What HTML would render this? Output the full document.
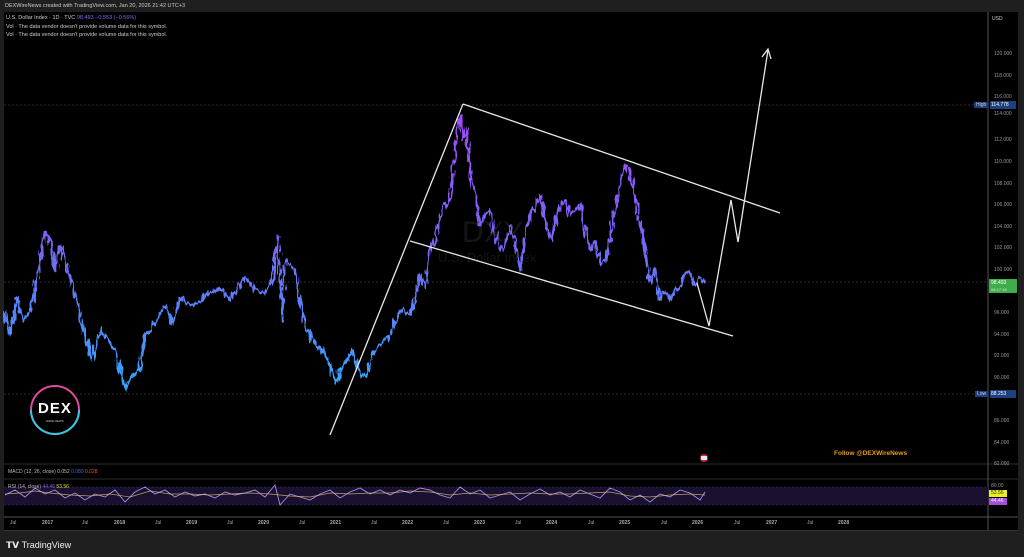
<!DOCTYPE html>
<html><head><meta charset="utf-8"><style>
*{margin:0;padding:0;box-sizing:border-box}
body{width:1024px;height:557px;background:#1f1f1f;font-family:"Liberation Sans",sans-serif;overflow:hidden;position:relative}
.t{position:absolute;white-space:nowrap}
</style></head><body>
<div class="t" style="left:5px;top:3px;font-size:5.5px;color:#ccc">DEXWireNews created with TradingView.com, Jan 20, 2026 21:42 UTC+3</div>
<div style="position:absolute;left:4px;top:12px;width:1014px;height:518px;background:#000"></div>
<svg style="position:absolute;left:0;top:0" width="1024" height="557">
<defs>
<linearGradient id="g" gradientUnits="userSpaceOnUse" x1="0" y1="110" x2="0" y2="390">
<stop offset="0" stop-color="#a04cff"/><stop offset="0.45" stop-color="#7a63f5"/><stop offset="1" stop-color="#35a6ff"/></linearGradient>
<filter id="n" x="-5%" y="-5%" width="110%" height="110%">
<feTurbulence type="fractalNoise" baseFrequency="0.35 0.08" numOctaves="2" seed="3"/>
<feDisplacementMap in="SourceGraphic" scale="9" xChannelSelector="R" yChannelSelector="G"/>
</filter>
</defs>
<g stroke-width="1">
<line x1="4" y1="105" x2="988" y2="105" stroke="#2a2a2a" stroke-dasharray="2 2"/>
<line x1="4" y1="282" x2="988" y2="282" stroke="#2a2a2a" stroke-dasharray="2 2"/>
<line x1="4" y1="394" x2="988" y2="394" stroke="#2a2a2a" stroke-dasharray="2 2"/>
<line x1="4" y1="464" x2="1018" y2="464" stroke="#2c2c2c"/>
<line x1="4" y1="479" x2="1018" y2="479" stroke="#2c2c2c"/>
<line x1="4" y1="517" x2="1018" y2="517" stroke="#555"/>
<line x1="988" y1="12" x2="988" y2="530" stroke="#555"/>
</g>
<rect x="4" y="487" width="984" height="18" fill="#1a1030"/>
<line x1="4" y1="487" x2="988" y2="487" stroke="#443366" stroke-width="0.6" stroke-dasharray="2 2"/>
<line x1="4" y1="505" x2="988" y2="505" stroke="#443366" stroke-width="0.6" stroke-dasharray="2 2"/>
<text x="462" y="242" font-size="30" fill="#151515" font-family="Liberation Sans">DXY</text>
<text x="438" y="262" font-size="13" fill="#151515" font-family="Liberation Sans">U.S. Dollar Index</text>
<polyline filter="url(#n)" fill="none" stroke="url(#g)" stroke-width="2.6" stroke-linejoin="round" points="5,312 10,335 17,297 22,320 30,312 37,280 45,232 50,240 55,270 60,247 67,265 75,295 85,335 92,360 100,330 108,340 115,350 125,388 133,375 140,370 145,335 155,322 165,305 172,325 180,298 190,305 200,302 210,292 220,288 230,300 240,285 246,277 255,290 265,295 272,280 278,235 282,320 285,260 290,265 295,270 300,300 305,325 315,345 322,350 330,365 335,382 345,363 352,350 358,370 365,378 372,355 380,345 390,335 400,310 410,315 415,300 420,275 425,288 430,250 435,240 440,215 445,205 450,200 455,150 460,115 463,140 467,130 470,175 475,195 480,225 485,215 490,210 495,235 500,250 505,245 510,225 515,240 520,272 525,240 530,215 535,205 540,195 545,220 550,240 555,225 560,205 565,200 570,215 575,210 580,205 585,230 590,250 595,242 600,262 605,262 610,240 615,210 620,185 625,165 630,172 635,195 640,225 645,250 650,282 655,270 660,300 665,290 670,300 675,290 680,288 685,272 690,272 695,285 700,278 705,283"/>
<g stroke="#e8e8e8" stroke-width="1.3" fill="none">
<line x1="330" y1="435" x2="463" y2="104"/>
<line x1="463" y1="104" x2="780" y2="213"/>
<line x1="410" y1="241" x2="733" y2="336"/>
<polyline points="697,283 709,326 731,200 738,242 768,50"/>
<polyline points="762,57 768,49 771,59"/>
</g>
<path fill="none" stroke="#b89cff" stroke-width="0.9" opacity="0.9" d="M5 495 L15 490 L25 497 L35 488 L45 494 L55 490 L65 498 L75 493 L85 500 L95 494 L105 497 L115 490 L125 502 L135 492 L145 487 L155 494 L165 490 L175 497 L185 492 L195 496 L205 494 L215 498 L225 492 L235 495 L245 493 L255 490 L265 497 L275 485 L280 505 L290 494 L300 497 L310 500 L320 494 L330 490 L340 498 L350 492 L360 488 L370 494 L380 490 L390 495 L400 490 L410 493 L420 488 L430 490 L440 495 L450 498 L460 487 L470 494 L480 490 L490 498 L500 495 L510 492 L520 500 L530 494 L540 489 L550 495 L560 492 L570 497 L580 490 L590 494 L600 498 L610 488 L620 492 L630 500 L640 495 L650 502 L660 494 L670 497 L680 490 L690 493 L700 500 L705 492"/>
<path fill="none" stroke="#e8c070" stroke-width="0.7" opacity="0.8" d="M5 494 L20 493 L35 491 L50 493 L70 495 L90 496 L110 494 L130 497 L150 491 L170 494 L190 494 L210 495 L230 494 L250 493 L270 494 L290 496 L310 497 L330 493 L350 494 L370 493 L390 493 L410 491 L430 492 L450 495 L470 493 L490 495 L510 494 L530 493 L550 494 L570 494 L590 493 L610 492 L630 496 L650 497 L670 495 L690 494 L705 495"/>
<circle cx="704" cy="458" r="4" fill="#c8252f"/><rect x="701" y="456" width="6" height="4" fill="#dfe8ff"/>
<circle cx="55" cy="410" r="24" fill="#000" stroke="#e04aa0" stroke-width="2"/>
<path d="M31 410 A24 24 0 0 0 79 410" fill="none" stroke="#35c8e0" stroke-width="2"/>
</svg>
<div class="t" style="left:38px;top:400px;font-size:15px;font-weight:bold;color:#fff;letter-spacing:1px">DEX</div>
<div class="t" style="left:46px;top:419px;font-size:3px;color:#ccc">WIRE NEWS</div>
<div class="t" style="left:6px;top:15px;font-size:5.5px;color:#ccc">U.S. Dollar Index · 1D · TVC <span style="color:#7b6cf6">98.493 −0.553 (−0.56%)</span></div>
<div class="t" style="left:6px;top:24px;font-size:5.5px;color:#ccc">Vol · The data vendor doesn't provide volume data for this symbol.</div>
<div class="t" style="left:6px;top:32px;font-size:5.5px;color:#ccc">Vol · The data vendor doesn't provide volume data for this symbol.</div>
<div class="t" style="left:8px;top:469px;font-size:5px;color:#bbb">MACD (12, 26, close) 0.052 <span style="color:#3a6cf0">0.080</span> <span style="color:#f05a28">0.028</span></div>
<div class="t" style="left:8px;top:484px;font-size:5px;color:#bbb">RSI (14, close) <span style="color:#8a5ff0">44.46</span> <span style="color:#d4e820">53.56</span></div>
<div class="t" style="left:834px;top:450px;font-size:6.5px;font-weight:bold;color:#e89a20">Follow @DEXWireNews</div>
<div class="t" style="left:992px;top:16px;font-size:5px;color:#ccc">USD</div>
<div style="position:absolute;left:990px;top:101px;width:26px;height:8px;background:#1e3f80"></div>
<div class="t" style="left:974px;top:102px;font-size:5px;color:#ccc;background:#1e3f80;padding:0 2px">High</div>
<div class="t" style="left:991px;top:102px;font-size:5px;color:#fff">114.778</div>
<div style="position:absolute;left:989px;top:279px;width:28px;height:14px;background:#3fae4a"></div>
<div class="t" style="left:991px;top:280px;font-size:5px;color:#fff">98.493</div>
<div class="t" style="left:991px;top:287px;font-size:4px;color:#d0f0d0">06:17:18</div>
<div style="position:absolute;left:990px;top:390px;width:26px;height:8px;background:#1e3f80"></div>
<div class="t" style="left:975px;top:391px;font-size:5px;color:#ccc;background:#1e3f80;padding:0 2px">Low</div>
<div class="t" style="left:991px;top:391px;font-size:5px;color:#fff">88.253</div>
<div class="t" style="left:991px;top:483px;font-size:5px;color:#999">80.00</div>
<div class="t" style="left:989px;top:490px;width:18px;height:7px;background:#e6f020;font-size:5px;color:#333;padding-left:2px">53.56</div>
<div class="t" style="left:989px;top:498px;width:18px;height:7px;background:#a050d8;font-size:5px;color:#eee;padding-left:2px">44.46</div>
<div style="position:absolute;left:4px;top:530px;width:1014px;height:1px;background:#333"></div>
<div class="t" style="left:6px;top:540px;font-size:9px;font-weight:bold;color:#eee">𝗧𝗩 <span style="font-weight:normal">TradingView</span></div>
<div class="t" style="left:994px;top:44px;font-size:5px;color:#999;line-height:21.6px">120.000<br>118.000<br>116.000<br>&nbsp;<br>112.000<br>110.000<br>108.000<br>106.000<br>104.000<br>102.000<br>100.000<br>&nbsp;<br>96.000<br>94.000<br>92.000<br>90.000<br>&nbsp;<br>86.000<br>84.000<br>82.000</div>
<div class="t" style="left:994px;top:111px;font-size:5px;color:#999">114.000</div>
<div class="t" style="left:10px;top:520px;font-size:5px;color:#aaa">
<span style="position:absolute;left:0">Jul</span><span style="position:absolute;left:32px;font-weight:bold">2017</span><span style="position:absolute;left:72px">Jul</span><span style="position:absolute;left:104px;font-weight:bold">2018</span><span style="position:absolute;left:145px">Jul</span><span style="position:absolute;left:176px;font-weight:bold">2019</span><span style="position:absolute;left:217px">Jul</span><span style="position:absolute;left:248px;font-weight:bold">2020</span><span style="position:absolute;left:289px">Jul</span><span style="position:absolute;left:320px;font-weight:bold">2021</span><span style="position:absolute;left:361px">Jul</span><span style="position:absolute;left:392px;font-weight:bold">2022</span><span style="position:absolute;left:433px">Jul</span><span style="position:absolute;left:464px;font-weight:bold">2023</span><span style="position:absolute;left:505px">Jul</span><span style="position:absolute;left:536px;font-weight:bold">2024</span><span style="position:absolute;left:578px">Jul</span><span style="position:absolute;left:609px;font-weight:bold">2025</span><span style="position:absolute;left:651px">Jul</span><span style="position:absolute;left:682px;font-weight:bold">2026</span><span style="position:absolute;left:724px">Jul</span><span style="position:absolute;left:756px;font-weight:bold">2027</span><span style="position:absolute;left:797px">Jul</span><span style="position:absolute;left:828px;font-weight:bold">2028</span>
</div>
</body></html>
